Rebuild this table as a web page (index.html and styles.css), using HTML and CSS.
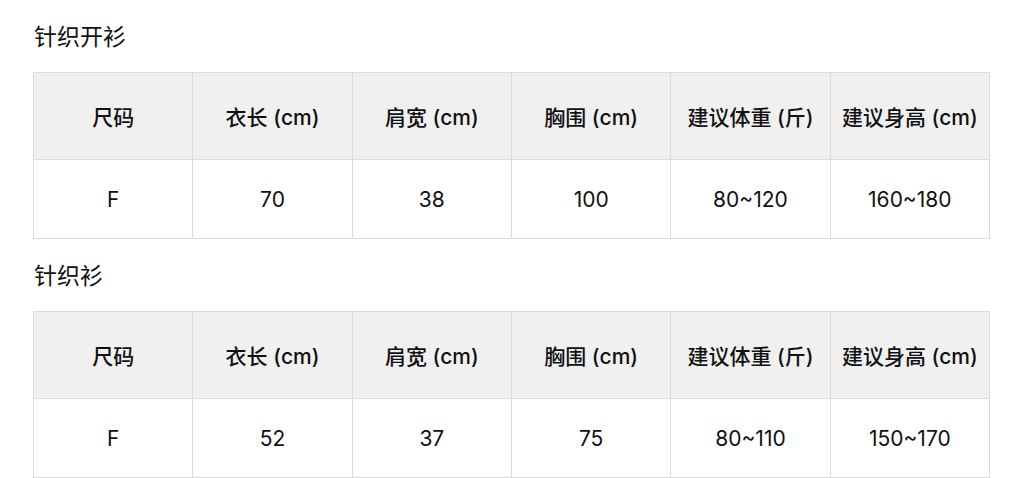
FILE: index.html
```html
<!DOCTYPE html>
<html lang="zh-CN">
<head>
<meta charset="utf-8">
<link rel="stylesheet" href="styles.css">
</head>
<body>
<div class="page">
  <h2 class="title">针织开衫</h2>
  <table class="size-table">
    <thead>
      <tr><th>尺码</th><th>衣长 (cm)</th><th>肩宽 (cm)</th><th>胸围 (cm)</th><th>建议体重 (斤)</th><th>建议身高 (cm)</th></tr>
    </thead>
    <tbody>
      <tr><td>F</td><td>70</td><td>38</td><td>100</td><td>80~120</td><td>160~180</td></tr>
    </tbody>
  </table>
  <h2 class="title">针织衫</h2>
  <table class="size-table">
    <thead>
      <tr><th>尺码</th><th>衣长 (cm)</th><th>肩宽 (cm)</th><th>胸围 (cm)</th><th>建议体重 (斤)</th><th>建议身高 (cm)</th></tr>
    </thead>
    <tbody>
      <tr><td>F</td><td>52</td><td>37</td><td>75</td><td>80~110</td><td>150~170</td></tr>
    </tbody>
  </table>
</div>
</body>
</html>
```
FILE: styles.css
```css
html, body {
  margin: 0;
  padding: 0;
  background: #fff;
}
body {
  font-family: Inter, "Noto Sans CJK SC", sans-serif;
  color: #111;
}
.page {
  padding: 23px 34px 0 33px;
}
.title {
  margin: 0 0 21px 1px;
  font-size: 23px;
  line-height: 28px;
  font-weight: 400;
}
.size-table {
  width: 957px;
  table-layout: fixed;
  border-collapse: collapse;
  margin-bottom: 23px;
}
.size-table th,
.size-table td {
  border: 1px solid #dcdcdc;
  text-align: center;
  font-size: 21px;
  font-weight: 400;
  padding: 0;
}
.size-table th {
  background: #f0f0f0;
  height: 86px;
  font-weight: 500;
}
.size-table td {
  height: 78px;
}
```
